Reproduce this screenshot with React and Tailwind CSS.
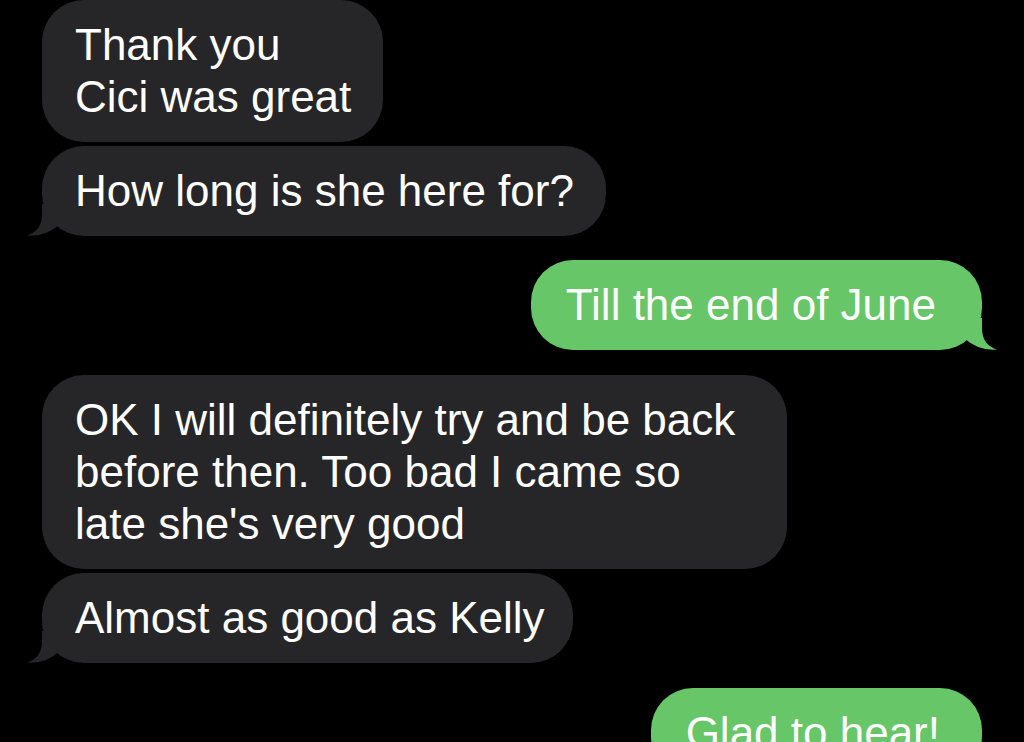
const GREY = "#262628";
const GREEN = "#66c668";

const LeftTail = () => (
  <svg
    className="absolute -left-4 bottom-0"
    width="36"
    height="32"
    viewBox="0 0 36 32"
  >
    <path d="M16 0 L16 10 Q16 27 1 31.5 Q20 33 34 20 L36 0 Z" fill={GREY} />
  </svg>
);

const RightTail = () => (
  <svg
    className="absolute -right-4 bottom-0"
    width="36"
    height="32"
    viewBox="0 0 36 32"
  >
    <path d="M20 0 L20 10 Q20 27 35 31.5 Q16 33 2 20 L0 0 Z" fill={GREEN} />
  </svg>
);

const Received = ({ lines, tail, className = "" }) => (
  <div
    className={`relative self-start rounded-[42px] bg-[#262628] py-[19px] pl-[33px] whitespace-nowrap ${className}`}
  >
    {lines.map((l, i) => (
      <div key={i}>{l}</div>
    ))}
    {tail && <LeftTail />}
  </div>
);

const Sent = ({ text, tail, className = "" }) => (
  <div
    className={`relative self-end rounded-[42px] bg-[#66c668] py-[19px] pl-[35px] ${className} whitespace-nowrap`}
  >
    {text}
    {tail && <RightTail />}
  </div>
);

export default function App() {
  return (
    <div
      className="h-[742px] w-[1024px] overflow-hidden bg-black text-white text-[44px] leading-[52px]"
      style={{ fontFamily: "'Liberation Sans', Arial, sans-serif" }}
    >
      <div className="flex flex-col px-[42px]">
        <Received className="pr-[32px]" lines={["Thank you", "Cici was great"]} />
        <Received
          className="mt-[4px] pr-[32px]"
          lines={["How long is she here for?"]}
          tail
        />
        <Sent className="mt-[24px] pr-[46px]" text="Till the end of June" tail />
        <Received
          className="mt-[25px] pr-[52px]"
          lines={[
            "OK I will definitely try and be back",
            "before then. Too bad I came so",
            "late she's very good",
          ]}
        />
        <Received
          className="mt-[4px] pr-[28px]"
          lines={["Almost as good as Kelly"]}
          tail
        />
        <Sent className="mt-[25px] pr-[42px]" text="Glad to hear!" />
      </div>
    </div>
  );
}
